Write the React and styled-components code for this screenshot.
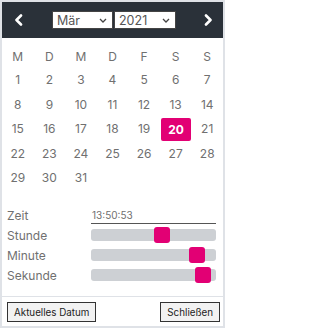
import React from 'react';
import styled, { createGlobalStyle } from 'styled-components';

const GlobalStyle = createGlobalStyle`
  html, body {
    margin: 0;
    padding: 0;
    background: #ffffff;
  }
  body {
    font-family: Inter, "Liberation Sans", sans-serif;
  }
`;

const Picker = styled.div`
  box-sizing: border-box;
  width: 225px;
  height: 328px;
  border: 2px solid #dfe2e7;
  background: #fff;
  display: flex;
  flex-direction: column;
`;

const Header = styled.div`
  height: 36px;
  flex-shrink: 0;
  background: #2a3139;
  display: flex;
  align-items: center;
  justify-content: space-between;
  padding: 0 8px 0 9px;
`;

const NavButton = styled.button`
  width: 14px;
  height: 20px;
  padding: 0;
  border: 0;
  background: none;
  display: flex;
  align-items: center;
  justify-content: center;
`;

const Selects = styled.div`
  display: flex;
  gap: 1px;
  margin-left: 2px;
`;

const Select = styled.div`
  box-sizing: border-box;
  width: ${({ $w }) => $w}px;
  height: 18px;
  background: #fff;
  border: 1px solid #444;
  display: flex;
  align-items: center;
  justify-content: space-between;
  padding: 0 5px 0 4px;
  font-size: 12.5px;
  color: #555;
`;

const Grid = styled.div`
  display: grid;
  grid-template-columns: repeat(7, 1fr);
  grid-auto-rows: 24.5px;
  padding: 5px 0 0;
`;

const DayName = styled.div`
  height: 26px;
  display: flex;
  align-items: center;
  justify-content: center;
  font-size: 12px;
  color: #707070;
`;

const Day = styled.div`
  display: flex;
  align-items: center;
  justify-content: center;
  font-size: 12px;
  color: ${({ $active }) => ($active ? '#fff' : '#707070')};
  font-weight: ${({ $active }) => ($active ? 700 : 400)};
  background: ${({ $active }) => ($active ? '#e20074' : 'transparent')};
  border-radius: 2px;
  margin: ${({ $active }) => ($active ? '1px 0 0 1px' : '0')};
`;

const TimeBox = styled.div`
  padding: 15px 7px 0 5px;
  display: flex;
  flex-direction: column;
`;

const TimeRow = styled.div`
  display: flex;
  align-items: center;
  height: 20px;
`;

const Label = styled.div`
  width: 84px;
  font-size: 12px;
  color: #707070;
`;

const TimeValue = styled.div`
  flex: 1;
  height: 14px;
  margin-top: 2px;
  border-bottom: 1px solid #555;
  font-size: 10px;
  color: #707070;
  padding-left: 1px;
  line-height: 12px;
`;

const Track = styled.div`
  position: relative;
  flex: 1;
  height: 12px;
  background: #cdd0d4;
  border-radius: 3px;
`;

const Thumb = styled.div`
  position: absolute;
  top: -2px;
  width: 16px;
  height: 16px;
  margin-left: -8px;
  background: #e20074;
  border-radius: 3px;
`;

const Footer = styled.div`
  margin-top: auto;
  border-top: 1px solid #dfe2e7;
  padding: 5px 3px 4px 5px;
  display: flex;
  justify-content: space-between;
`;

const Button = styled.button`
  box-sizing: border-box;
  height: 20px;
  padding: 0 6px;
  border: 1px solid #333;
  background: #f2f2f2;
  font-family: Inter, "Liberation Sans", sans-serif;
  font-size: 9.8px;
  color: #222;
`;

const Chevron = ({ dir }) => (
  <svg width="9" height="12" viewBox="0 0 9 12">
    <path
      d={dir === 'left' ? 'M7 1.5 L2.5 6 L7 10.5' : 'M2 1.5 L6.5 6 L2 10.5'}
      fill="none"
      stroke="#fff"
      strokeWidth="2.6"
      strokeLinecap="round"
      strokeLinejoin="round"
    />
  </svg>
);

const SmallCaret = () => (
  <svg width="8" height="5" viewBox="0 0 8 5">
    <path d="M1 1 L4 4 L7 1" fill="none" stroke="#444" strokeWidth="1.3" />
  </svg>
);

const dayNames = ['M', 'D', 'M', 'D', 'F', 'S', 'S'];
const days = Array.from({ length: 31 }, (_, i) => i + 1);

const sliders = [
  { label: 'Stunde', value: 13, max: 23 },
  { label: 'Minute', value: 50, max: 59 },
  { label: 'Sekunde', value: 53, max: 59 },
];

const App = () => (
  <>
    <GlobalStyle />
    <Picker>
      <Header>
        <NavButton>
          <Chevron dir="left" />
        </NavButton>
        <Selects>
          <Select $w={61}>
            <span>Mär</span>
            <SmallCaret />
          </Select>
          <Select $w={62}>
            <span>2021</span>
            <SmallCaret />
          </Select>
        </Selects>
        <NavButton>
          <Chevron dir="right" />
        </NavButton>
      </Header>
      <Grid>
        {dayNames.map((d, i) => (
          <DayName key={i}>{d}</DayName>
        ))}
        {days.map((d) => (
          <Day key={d} $active={d === 20}>
            {d}
          </Day>
        ))}
      </Grid>
      <TimeBox>
        <TimeRow>
          <Label>Zeit</Label>
          <TimeValue>13:50:53</TimeValue>
        </TimeRow>
        {sliders.map((s) => (
          <TimeRow key={s.label}>
            <Label>{s.label}</Label>
            <Track>
              <Thumb style={{ left: `${(s.value / s.max) * 100}%` }} />
            </Track>
          </TimeRow>
        ))}
      </TimeBox>
      <Footer>
        <Button>Aktuelles Datum</Button>
        <Button>Schließen</Button>
      </Footer>
    </Picker>
  </>
);

export default App;
